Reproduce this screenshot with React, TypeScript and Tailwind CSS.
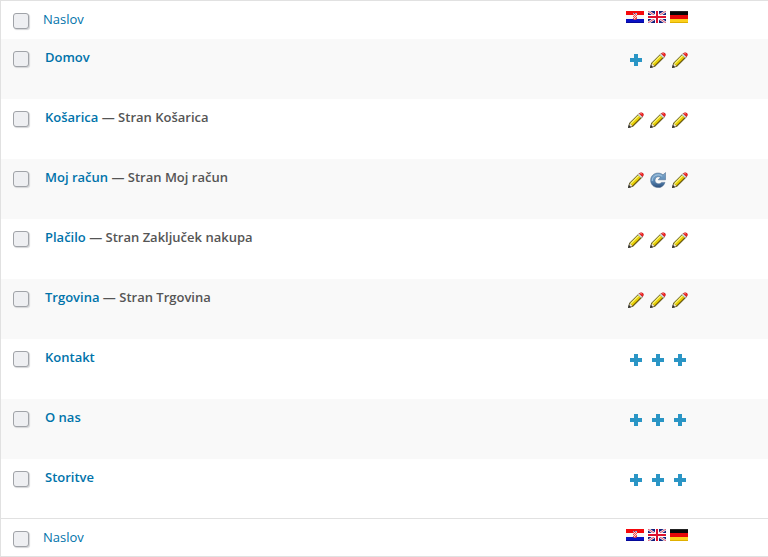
type Status = 'add' | 'edit' | 'sync'

type Page = {
  title: string
  state?: string
  langs: Status[]
}

const pages: Page[] = [
  { title: 'Domov', langs: ['add', 'edit', 'edit'] },
  { title: 'Košarica', state: 'Stran Košarica', langs: ['edit', 'edit', 'edit'] },
  { title: 'Moj račun', state: 'Stran Moj račun', langs: ['edit', 'sync', 'edit'] },
  { title: 'Plačilo', state: 'Stran Zaključek nakupa', langs: ['edit', 'edit', 'edit'] },
  { title: 'Trgovina', state: 'Stran Trgovina', langs: ['edit', 'edit', 'edit'] },
  { title: 'Kontakt', langs: ['add', 'add', 'add'] },
  { title: 'O nas', langs: ['add', 'add', 'add'] },
  { title: 'Storitve', langs: ['add', 'add', 'add'] },
]

const langNames = ['Hrvaški', 'Angleški', 'Nemški']

function AddIcon() {
  return (
    <svg className="size-4" viewBox="0 0 16 16" aria-hidden="true" shapeRendering="crispEdges">
      <path d="M6 2h4v4h4v4h-4v4H6v-4H2V6h4z" fill="#2a95c5" />
    </svg>
  )
}

function EditIcon() {
  return (
    <svg className="size-4" viewBox="0 0 16 16" aria-hidden="true">
      <path d="M0 16 1.2 11 10.8 1.4 14.6 5.2 5 14.8Z" fill="#5a521c" />
      <path d="M0.8 15.2 2 11.4 4.6 14Z" fill="#f2e6d6" />
      <path d="M0 16 0.8 12.8 3.2 15.2Z" fill="#2c2c30" />
      <path d="M2 11.3 10.2 3.1 11.3 4.2 3.1 12.4Z" fill="#fff66a" />
      <path d="M3.1 12.4 11.3 4.2 12.4 5.3 4.2 13.5Z" fill="#f8e000" />
      <path d="M4.2 13.5 12.4 5.3 12.9 5.8 4.7 14Z" fill="#b89400" />
      <path d="M9.8 2.8 11.1 1.5 14.4 4.8 13.1 6.1Z" fill="#d8dcde" />
      <path d="M11 1.4Q12.8-0.4 15 1 16.5 3.1 14.6 5Z" fill="#b01414" />
      <path d="M11.7 1.5Q13-0.1 14.7 1.3 15.8 3 14.4 4.2Z" fill="#f52424" />
      <path d="M12.2 1.7Q13.1 1 13.9 1.8" stroke="#ff8c8c" strokeWidth="0.7" fill="none" />
    </svg>
  )
}

function SyncIcon() {
  return (
    <svg className="size-4" viewBox="0 0 16 16" aria-hidden="true">
      <defs>
        <linearGradient id="sync" x1="0" y1="0" x2="0" y2="1">
          <stop offset="0" stopColor="#7fa6c8" />
          <stop offset="0.5" stopColor="#6090bc" />
          <stop offset="1" stopColor="#2c4f7c" />
        </linearGradient>
      </defs>
      <path
        d="M15.6 0.5V7.8H8.2L10.4 5.4C8.4 4 5.4 4.8 5 8.2C5 11.8 9.2 12.8 11.6 10.4H15C13.6 14.4 10.6 15.8 7.7 15.6C3.6 15.4 0.6 12.2 0.6 8.3C0.6 1.4 8.6-1 13 2.8Z"
        fill="url(#sync)"
        stroke="#48678a"
        strokeWidth="0.5"
      />
      <path d="M2.2 9C2.2 3.4 8 1.2 12.2 4.2" fill="none" stroke="#b4d2ea" strokeWidth="0.8" />
    </svg>
  )
}

function CroatiaFlag() {
  return (
    <svg className="h-3 w-[18px]" viewBox="0 0 18 12" role="img" aria-label="Hrvaški">
      <path d="M0 0h18v4H0z" fill="#f5080c" />
      <path d="M0 4h18v4H0z" fill="#f7f7f7" />
      <path d="M0 8h18v4H0z" fill="#0a12c4" />
      <path d="M7 3h4v5q-2 2-4 0z" fill="#f04a4a" />
      <path d="M7 2h1v1H7zM9 2h1v1H9zM10 2h1v1h-1z" fill="#7fb0e8" />
      <path d="M8 3h1v1H8zM10 3h1v1h-1zM7 4h1v1H7zM9 4h1v1H9zM8 5h1v1H8zM10 5h1v1h-1zM7 6h1v1H7zM9 6h1v1H9zM8 7h1v1H8z" fill="#fbd8d8" />
      <path d="M0 11h18v1H0z" fill="#000070" opacity="0.5" />
    </svg>
  )
}

function UkFlag() {
  return (
    <svg className="h-3 w-[18px]" viewBox="0 0 18 12" role="img" aria-label="Angleški">
      <path d="M0 0h18v12H0z" fill="#141f7c" />
      <path d="M0 0 18 12M18 0 0 12" stroke="#f4f4f8" strokeWidth="2.4" />
      <path d="M0 0 18 12M18 0 0 12" stroke="#d82848" strokeWidth="0.8" />
      <path d="M7 0h4v12H7zM0 4h18v4H0z" fill="#fff" />
      <path d="M8 0h2v12H8zM0 5h18v2H0z" fill="#dd1230" />
    </svg>
  )
}

function GermanyFlag() {
  return (
    <svg className="h-3 w-[18px]" viewBox="0 0 18 12" role="img" aria-label="Nemški">
      <path d="M0 0h18v4H0z" fill="#080808" />
      <path d="M0 0h18v1H0z" fill="#222" />
      <path d="M0 4h18v4H0z" fill="#e60808" />
      <path d="M0 8h18v4H0z" fill="#fcd01c" />
      <path d="M0 11h18v1H0z" fill="#e0b000" />
    </svg>
  )
}

function StatusIcon({ status }: { status: Status }) {
  if (status === 'add') return <AddIcon />
  if (status === 'sync') return <SyncIcon />
  return <EditIcon />
}

function Checkbox({ label }: { label: string }) {
  return (
    <input
      type="checkbox"
      aria-label={label}
      className="block size-4 appearance-none rounded-[3px] border border-[#a0a3a8] bg-[#eeeff2] shadow-[1px_1px_1px_#d4d5d8] checked:bg-[#0073aa]"
    />
  )
}

function HeadingRow() {
  return (
    <tr className="h-[38px] align-top">
      <th className="pt-3 pl-3 text-left">
        <Checkbox label="Izberi vse" />
      </th>
      <th className="pt-2 text-left font-normal">
        <a href="#naslov" className="text-[#0073aa]">Naslov</a>
      </th>
      <th className="pt-2.5">
        <div className="flex gap-1">
          <CroatiaFlag />
          <UkFlag />
          <GermanyFlag />
        </div>
      </th>
    </tr>
  )
}

export default function App() {
  return (
    <div className="border border-r-0 border-[#e1e1e1] bg-white font-['Open_Sans','Noto_Sans',sans-serif] text-[13px] leading-5 text-[#555]">
      <table className="w-full table-fixed border-collapse">
        <colgroup>
          <col className="w-[42px]" />
          <col />
          <col className="w-[142px]" />
        </colgroup>
        <thead>
          <HeadingRow />
        </thead>
        <tbody>
          {pages.map((page) => (
            <tr key={page.title} className="h-[60px] align-top last:h-[59px] odd:bg-[#f9f9f9]">
              <td className="pt-3 pl-3">
                <Checkbox label={`Izberi ${page.title}`} />
              </td>
              <td className="pt-2 pl-0.5 font-semibold">
                <a href="#uredi" className="text-[#0073aa]">{page.title}</a>
                {page.state && <span> — {page.state}</span>}
              </td>
              <td className="pt-[13px] pl-0.5">
                <div className="flex gap-1.5">
                  {page.langs.map((status, i) => (
                    <a key={langNames[i]} href="#prevod" aria-label={`${langNames[i]}: ${page.title}`}>
                      <StatusIcon status={status} />
                    </a>
                  ))}
                </div>
              </td>
            </tr>
          ))}
        </tbody>
        <tfoot className="border-t border-[#e1e1e1]">
          <HeadingRow />
        </tfoot>
      </table>
    </div>
  )
}
